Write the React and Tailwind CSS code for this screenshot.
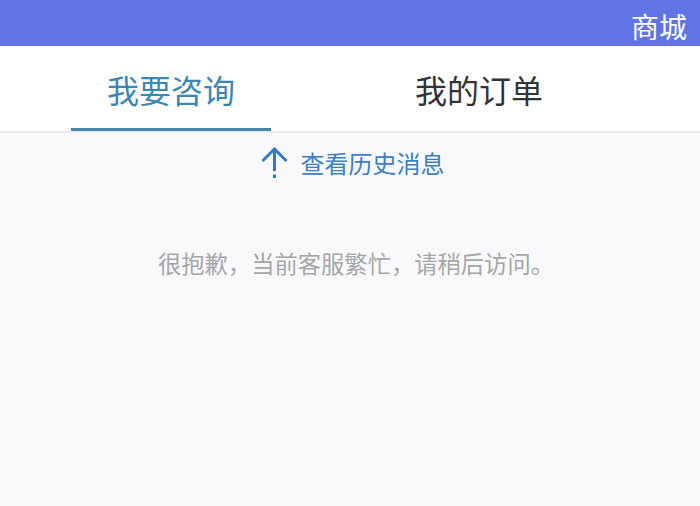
export default function App() {
  const font = { fontFamily: '"Noto Sans CJK SC", "Noto Sans", sans-serif' };
  return (
    <div className="w-[700px] h-[506px] bg-[#f9f9fb] flex flex-col overflow-hidden" style={font}>
      <div className="h-[46px] bg-[#6174e5] flex items-center justify-end pr-[13px] pt-[6px]">
        <span className="text-white text-[28px] leading-none">商城</span>
      </div>
      <div className="h-[87px] bg-white border-b-2 border-[#ebebef] flex">
        <div className="ml-[71px] w-[200px] flex flex-col">
          <div className="flex-1 flex items-center justify-center pt-[3px] text-[32px] text-[#3c86b5] leading-none">我要咨询</div>
          <div className="h-[3px] bg-[#4682aa]"></div>
        </div>
        <div className="ml-[108px] w-[200px] flex flex-col">
          <div className="flex-1 flex items-center justify-center pt-[3px] text-[32px] text-[#333333] leading-none">我的订单</div>
          <div className="h-[3px]"></div>
        </div>
      </div>
      <div className="flex items-center justify-center mt-[14px] gap-[13px] pl-[5px]">
        <svg width="27" height="32" viewBox="0 0 27 32" fill="none" stroke="#2f7cc4" strokeWidth="3" strokeLinecap="butt">
          <path d="M1.5 14 L13.5 2 L25.5 14" strokeLinejoin="miter" />
          <path d="M13.5 2 L13.5 24" />
          <path d="M13.5 27.5 L13.5 31" />
        </svg>
        <span className="text-[24px] text-[#3b7fc4] leading-none">查看历史消息</span>
      </div>
      <div className="flex justify-center mt-[73px] pl-[12px]">
        <span className="text-[23.3px] text-[#a6a6a9] leading-none">很抱歉，当前客服繁忙，请稍后访问。</span>
      </div>
    </div>
  );
}
